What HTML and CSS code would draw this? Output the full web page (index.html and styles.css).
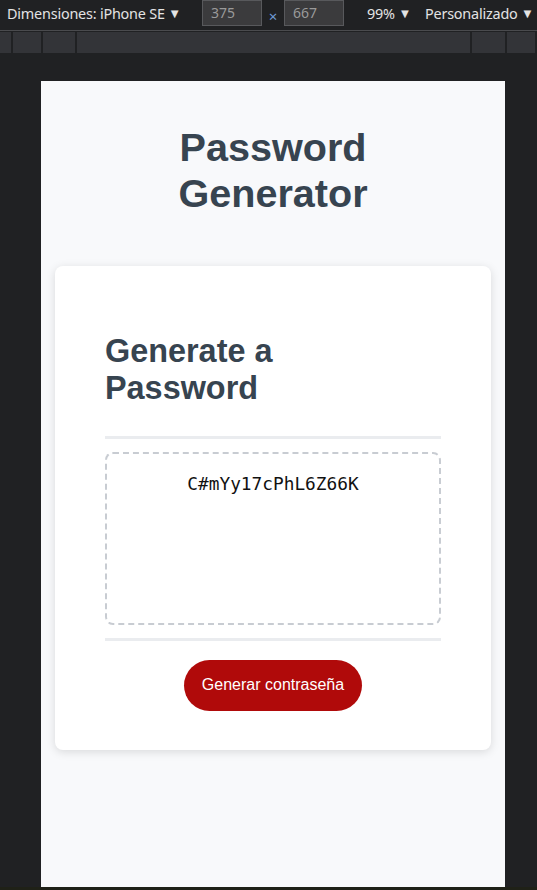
FILE: index.html
```html
<!DOCTYPE html>
<html lang="es">
<head>
<meta charset="utf-8">
<title>Password Generator</title>
<link rel="stylesheet" href="styles.css">
</head>
<body>
<div class="devtools">
  <div class="toolbar">
    <span class="dd dims">Dimensiones: iPhone SE <span class="arrow">▼</span></span>
    <span class="num">375</span>
    <span class="times">×</span>
    <span class="num">667</span>
    <span class="dd pct">99% <span class="arrow">▼</span></span>
    <span class="dd custom">Personalizado <span class="arrow">▼</span></span>
  </div>
  <div class="ruler">
    <span class="seg s1"></span>
    <span class="seg s2"></span>
    <span class="seg s3"></span>
    <span class="seg s4"></span>
    <span class="seg s5"></span>
    <span class="seg s6"></span>
    <span class="seg s7"></span>
  </div>
</div>
<div class="viewport">
  <main class="page">
    <h1 class="title">Password<br>Generator</h1>
    <section class="card">
      <h2 class="card-title">Generate a<br>Password</h2>
      <div class="divider"></div>
      <div class="output">C#mYy17cPhL6Z66K</div>
      <div class="divider"></div>
      <div class="actions">
        <button class="btn" type="button">Generar contraseña</button>
      </div>
    </section>
  </main>
</div>
<div class="bottombar"></div>
</body>
</html>
```
FILE: styles.css
```css
* { box-sizing: border-box; }
html, body { margin: 0; padding: 0; }
body {
  width: 537px;
  height: 890px;
  overflow: hidden;
  background: #202123;
  display: flex;
  flex-direction: column;
  font-family: "Noto Sans", "Open Sans", sans-serif;
}
.devtools { flex: none; }
.toolbar {
  height: 30px;
  display: flex;
  align-items: flex-start;
  color: #e3e3e3;
  font-size: 14.4px;
  border-bottom: 1px solid #4a4b4e;
  box-sizing: content-box;
}
.dd { line-height: 28px; white-space: nowrap; letter-spacing: -0.2px; }
.arrow { font-size: 13px; position: relative; top: -1px; }
.dims { margin-left: 7px; width: 195px; }
.num {
  width: 60px;
  height: 26px;
  background: #3b3b3d;
  border: 1px solid #58595c;
  color: #9a9a9a;
  font-size: 14px;
  line-height: 24px;
  padding-left: 8px;
}
.times {
  width: 22px;
  text-align: center;
  color: #6f9ad6;
  font-size: 15px;
  line-height: 32px;
}
.pct { margin-left: 23px; width: 58px; }
.ruler {
  margin-top: 1px;
  height: 21px;
  background: #333438;
  display: flex;
}
.seg { height: 100%; border-right: 2px solid #202123; }
.s1 { width: 13px; }
.s2 { width: 30px; }
.s3 { width: 34px; }
.s4 { width: 395px; }
.s5 { width: 35px; }
.s6 { width: 30px; }
.s7 { flex: 1; border-right: 0; }
.viewport {
  flex: 1;
  min-height: 0;
  padding-top: 28px;
  padding-left: 41px;
  display: flex;
}
.page {
  width: 464px;
  background: #f8f9fb;
  padding: 44px 14px 0;
  font-family: "Liberation Sans", Arial, sans-serif;
}
.title {
  margin: 0 0 50px;
  text-align: center;
  font-size: 39.6px;
  line-height: 45.5px;
  font-weight: 700;
  color: #374450;
}
.card {
  background: #fff;
  border-radius: 8px;
  box-shadow: 0 2px 10px rgba(0, 0, 0, 0.13);
  padding: 67px 50px 39px;
}
.card-title {
  margin: 0 0 28px;
  font-size: 32.4px;
  line-height: 37.3px;
  font-weight: 700;
  color: #374450;
}
.divider { height: 3px; background: #eaecef; }
.output {
  margin: 13px 0 13px;
  height: 173px;
  border: 2px dashed #c8ccd2;
  border-radius: 8px;
  padding-top: 18px;
  text-align: center;
  font-family: "DejaVu Sans Mono", "Liberation Mono", monospace;
  font-size: 17.8px;
  line-height: 24px;
  color: #111;
}
.actions { display: flex; justify-content: center; padding-top: 19px; }
.btn {
  height: 51px;
  padding: 0 18px;
  border: 0;
  border-radius: 26px;
  background: #b00a0a;
  color: #fff;
  font-family: "Liberation Sans", Arial, sans-serif;
  font-size: 16px;
}
.bottombar { flex: none; height: 3px; background: #1f2117; }
```
